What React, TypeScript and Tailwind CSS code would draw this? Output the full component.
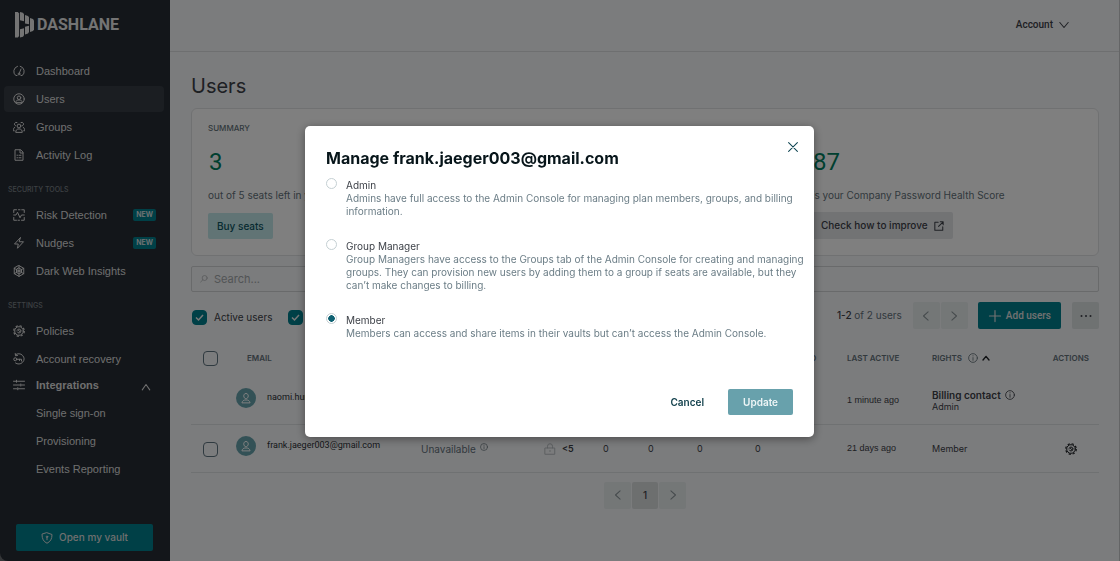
import { useState, type ReactNode } from "react";

function Icon({ children, className = "size-3" }: { children: ReactNode; className?: string }) {
  return (
    <svg
      viewBox="0 0 24 24"
      fill="none"
      stroke="currentColor"
      strokeWidth="2"
      strokeLinecap="round"
      strokeLinejoin="round"
      aria-hidden="true"
      className={`shrink-0 ${className}`}
    >
      {children}
    </svg>
  );
}

const icons = {
  dashboard: (
    <>
      <path d="M8 21H5.500A10.700 10.700 0 0 1 9 2.600M14.500 2.500A10.700 10.700 0 0 1 18.500 21H16" />
      <path d="M16 8l-3 7.500" />
      <circle cx="12" cy="18" r="1.800" />
    </>
  ),
  users: (
    <>
      <circle cx="12" cy="12" r="10.5" />
      <circle cx="12" cy="9.5" r="3.5" />
      <path d="M5.5 18.5c0-3 2.500-4 4.500-4.500h4c2 .5 4.500 1.500 4.500 4.500z" />
    </>
  ),
  groups: (
    <>
      <circle cx="12" cy="10" r="3.8" />
      <path d="M5.500 22c0-4 2.500-5.500 4.500-6h4c2 .5 4.500 2 4.500 6z" />
      <path d="M8 3a3.500 3.500 0 1 0-3 6.500M16 3a3.500 3.500 0 1 1 3 6.500M3.500 12.500C1 14 .5 17 .5 19.500h2M20.500 12.500c2.500 1.500 3 4.500 3 7h-2" />
    </>
  ),
  log: (
    <>
      <path d="M14.500 1.500H4v21h16V7zM14 2v6h6" />
      <path d="M8 12.500h1M12 12.500h4M8 17.500h1M12 17.500h4" />
    </>
  ),
  risk: (
    <>
      <path d="M1.500 7V1.500H7M11 1.500h3M17.500 1.500h5V7M22.500 17v5.500H17M13 22.500h-3M7 22.500H1.500V17" />
      <path d="M1.500 12H6l3-5.500 5 11 3-5.500h5.500" />
    </>
  ),
  nudges: <path d="M14.500 1.500L3 14h7.500L9 22.500 21 9.500h-8z" />,
  web: (
    <>
      <path d="M12 1.200l9.500 5.400v10.800L12 22.800l-9.500-5.400V6.600z" />
      <path d="M12 6l5 3v6l-5 3-5-3V9zM12 1.500V23M2.500 6.600l19 10.800M21.500 6.600l-19 10.800" />
    </>
  ),
  gear: (
    <>
      <circle cx="12" cy="12" r="8.600" />
      <circle cx="12" cy="12" r="10.600" strokeWidth="2.400" strokeLinecap="butt" strokeDasharray="4.500 3.825" />
      <circle cx="12" cy="12" r="4" strokeDasharray="9.500 3" />
      <path d="M11 11l2.500 2" />
    </>
  ),
  recovery: (
    <>
      <path d="M5 3.500A10.400 10.400 0 1 1 5 20M4.500 1l.5 4.500 4-.5" />
      <circle cx="4.500" cy="12.500" r="3" />
      <path d="M7.500 12.500H17v3.500M13 12.500V15" />
    </>
  ),
  sliders: (
    <path d="M1 4.500h4.500M9 4.500h14M7 2.500v4M1 12h12.500M17 12h6M15.500 10v4M1 19.500h6.500M11 19.500h12M9.500 17.500v4" />
  ),
};

function Info({ className = "size-2.5" }: { className?: string }) {
  return (
    <Icon className={className}>
      <circle cx="12" cy="12" r="10.500" />
      <path d="M12 11v6.500M12 6.500v.6" />
    </Icon>
  );
}

function Chevron({ dir, className = "size-3" }: { dir: "up" | "down" | "left" | "right"; className?: string }) {
  const paths = {
    up: "M3 19l9-13 9 13",
    down: "M2 6l10 12 10-12",
    left: "M17 2L6 12l11 10",
    right: "M7 2l11 10-11 10",
  };
  return (
    <Icon className={className}>
      <path strokeWidth="2.500" d={paths[dir]} />
    </Icon>
  );
}

function NavItem({
  icon,
  label,
  active,
  isNew,
}: {
  icon?: ReactNode;
  label: string;
  active?: boolean;
  isNew?: boolean;
}) {
  return (
    <a
      href="#"
      className={`flex h-[26px] items-center rounded-sm pr-2 pl-2 text-[11px] ${active ? "bg-[#373c44]" : ""}`}
    >
      <span className="flex w-6 items-center pl-px">{icon && <Icon className="size-3">{icon}</Icon>}</span>
      <span className="flex-1">{label}</span>
      {isNew && (
        <span className="rounded-xs bg-[#00818f] px-[3px] font-[Inter] text-[7px] leading-3 font-semibold text-[#e8e8e8]">
          NEW
        </span>
      )}
    </a>
  );
}

function NavLabel({ children }: { children: ReactNode }) {
  return (
    <h2 className="mt-3.5 mb-1 pl-1 font-[Inter] text-[7px] leading-4 font-medium text-[#7b8288]">{children}</h2>
  );
}

function Sidebar() {
  return (
    <aside className="flex w-[170px] shrink-0 flex-col rounded-bl-lg bg-[#272d35] font-['Liberation_Sans',sans-serif] text-[#dedede]">
      <div className="flex h-[58px] items-start gap-[3px] pt-3 pl-[15px] text-[#e8e8e8]">
        <svg viewBox="0 0 19 26" className="h-[26px] w-[19px] shrink-0" fill="currentColor" aria-hidden="true">
          <path d="M0 0h2.800l1.300 1.400v22.600l-1.300 1.400H0z" />
          <path d="M5 0l3 .7 1 1.500v7L5 8.200zM5 17.300l4-1v6.900l-1 1.500-3 .8z" />
          <path d="M10 3l3 .9 1 1.400v7L10 11.500zM10 14.800l4-1V20l-1 1.500-3 1z" />
          <path d="M15 6l3 1 1 1.500v9L18 19l-3 1z" />
        </svg>
        <span className="mt-px font-[Roboto] text-base leading-6 font-bold">DASHLANE</span>
      </div>
      <nav className="flex flex-col pr-1.5 pl-1">
        <div className="flex flex-col gap-0.5">
          <NavItem icon={icons.dashboard} label="Dashboard" />
          <NavItem icon={icons.users} label="Users" active />
          <NavItem icon={icons.groups} label="Groups" />
          <NavItem icon={icons.log} label="Activity Log" />
        </div>
        <NavLabel>SECURITY TOOLS</NavLabel>
        <div className="flex flex-col gap-0.5">
          <NavItem icon={icons.risk} label="Risk Detection" isNew />
          <NavItem icon={icons.nudges} label="Nudges" isNew />
          <NavItem icon={icons.web} label="Dark Web Insights" />
        </div>
        <NavLabel>SETTINGS</NavLabel>
        <div className="flex flex-col gap-0.5">
          <NavItem icon={icons.gear} label="Policies" />
          <NavItem icon={icons.recovery} label="Account recovery" />
        </div>
        <button type="button" className="flex h-[26px] items-center pr-[13px] pl-2 text-[11px] font-bold">
          <span className="flex w-6 pl-px">
            <Icon className="size-3">{icons.sliders}</Icon>
          </span>
          <span className="flex-1 text-left">Integrations</span>
          <Chevron dir="up" className="mt-1 size-2.5" />
        </button>
        <div className="mt-0.5 flex flex-col gap-0.5">
          <NavItem label="Single sign-on" />
          <NavItem label="Provisioning" />
          <NavItem label="Events Reporting" />
        </div>
      </nav>
      <button
        type="button"
        className="mr-[17px] mb-2.5 ml-4 mt-auto flex h-[27px] items-center justify-center gap-1.5 rounded-xs bg-[#00818f] font-[Inter] text-[10px] font-medium"
      >
        <Icon className="size-3">
          <path d="M12 1.500l10 3.500c0 9-3 14-10 17.500C5 19 2 14 2 5z" />
          <circle cx="12" cy="9.500" r="1.500" />
          <path d="M12 11v4.500" />
        </Icon>
        Open my vault
      </button>
    </aside>
  );
}

function Check({ label, checked }: { label: string; checked?: boolean }) {
  return (
    <span className="relative flex size-[15px] shrink-0">
      <input
        type="checkbox"
        aria-label={label}
        defaultChecked={checked}
        className="peer size-[15px] appearance-none rounded-[4px] border border-[#5f7480] checked:border-[#00818f] checked:bg-[#00818f]"
      />
      <svg
        viewBox="0 0 15 15"
        fill="none"
        stroke="#f2f2f2"
        strokeWidth="1.500"
        aria-hidden="true"
        className="pointer-events-none absolute inset-0 hidden peer-checked:block"
      >
        <path d="M4 7.500l2.500 2.500 4.500-5" />
      </svg>
    </span>
  );
}

function Avatar() {
  return (
    <span className="flex size-5 shrink-0 items-center justify-center rounded-full bg-[#66a3ad] text-white">
      <Icon className="size-3">
        <path d="M12 3c3 0 4.500 2 4.500 4.800 0 3-2 5.700-4.500 5.700s-4.500-2.700-4.500-5.700C7.500 5 9 3 12 3zM4 21c.5-3 3-4.500 5.500-5h5c2.500.5 5 2 5.500 5z" />
      </Icon>
    </span>
  );
}

function Pager({ dir }: { dir: "left" | "right" }) {
  return (
    <button
      type="button"
      aria-label={dir === "left" ? "Previous page" : "Next page"}
      className="flex h-[27px] w-[27px] items-center justify-center rounded-xs bg-[#e9eeef] text-[#8c979b]"
    >
      <Chevron dir={dir} className="size-2.5" />
    </button>
  );
}

const users = [
  { email: "naomi.hunter003@gmail.com", active: "1 minute ago", owner: true },
  { email: "frank.jaeger003@gmail.com", active: "21 days ago", owner: false },
];

function UsersTable() {
  return (
    <table className="w-full table-fixed text-left text-[9px] text-[#3d4148]">
      <colgroup>
        <col className="w-[45px]" />
        <col />
        <col className="w-[123px]" />
        <col className="w-[59px]" />
        <col className="w-[45px]" />
        <col className="w-[49px]" />
        <col className="w-[58px]" />
        <col className="w-[92px]" />
        <col className="w-[85px]" />
        <col className="w-[167px]" />
      </colgroup>
      <thead className="text-[8px] font-semibold text-[#64727a]">
        <tr className="h-9">
          <th className="pl-3">
            <Check label="Select all users" />
          </th>
          <th className="pl-[11px] font-semibold">EMAIL</th>
          <th className="font-semibold">HEALTH SCORE</th>
          <th className="font-semibold">LOGINS</th>
          <th className="font-semibold">SAFE</th>
          <th className="font-semibold">WEAK</th>
          <th className="font-semibold">REUSED</th>
          <th className="font-semibold">COMPROMISED</th>
          <th className="font-semibold">LAST ACTIVE</th>
          <th className="font-semibold">
            <span className="flex items-center justify-between pr-2.5">
              <span className="flex items-center gap-1.5">
                RIGHTS
                <span className="flex items-center gap-1">
                  <Info />
                  <Icon className="size-2 text-[#1c2024]">
                    <path strokeWidth="4" d="M3 18l9-11 9 11" />
                  </Icon>
                </span>
              </span>
              ACTIONS
            </span>
          </th>
        </tr>
      </thead>
      <tbody>
        {users.map((u) => (
          <tr key={u.email} className="h-12 border-b border-[#dfe2e4]">
            <td className="pt-0.5 pl-3">{!u.owner && <Check label={`Select ${u.email}`} />}</td>
            <td>
              <span className="flex items-center gap-[11px] pb-1 font-[Roboto] text-[#2b3036]">
                <Avatar />
                {u.email}
              </span>
            </td>
            <td className="pt-0.5 text-[10px] text-[#64727a]">
              <span className="flex items-center gap-1">
                Unavailable
                <Info className="mb-1 size-2" />
              </span>
            </td>
            <td className="pt-0.5">
              <span className="flex items-center gap-1.5 font-semibold">
                <Icon className="size-3 text-[#b9bfc3]">
                  <path d="M2.500 10h19v12.500h-19zM7 10V6.500a5 5 0 0 1 10 0V10M12 15v2" />
                </Icon>
                &lt;5
              </span>
            </td>
            <td className="pt-0.5">0</td>
            <td className="pt-0.5">0</td>
            <td className="pt-0.5">0</td>
            <td className="pt-0.5">0</td>
            <td className="pt-0.5 font-['Liberation_Sans']">{u.active}</td>
            <td className="pt-0.5">
              {u.owner ? (
                <span className="flex flex-col">
                  <span className="flex items-center gap-1 text-[10px] leading-3 font-semibold">
                    Billing contact <Info />
                  </span>
                  <span className="leading-3">Admin</span>
                </span>
              ) : (
                <span className="flex items-center justify-between pr-[22px]">
                  Member
                  <button type="button" aria-label="Manage user" className="text-[#1c2024]">
                    <Icon className="size-3">{icons.gear}</Icon>
                  </button>
                </span>
              )}
            </td>
          </tr>
        ))}
      </tbody>
    </table>
  );
}

function Page() {
  return (
    <main className="min-w-0 flex-1 border-r border-[#c8cacc] bg-[#f7f8fa] text-[#3d4148]">
      <header className="flex h-[52px] items-center justify-end border-b border-[#dcdee0] pr-[50px] pb-0.5">
        <button type="button" className="flex items-center gap-1.5 font-[Roboto] text-[10px] font-medium">
          Account <Chevron dir="down" className="size-2.5" />
        </button>
      </header>
      <div className="pr-5 pl-[21px]">
        <h1 className="pt-5 pb-2 text-xl leading-7">Users</h1>
        <section className="grid h-[148px] grid-cols-3 gap-8 rounded-md border border-[#e1e3e5] bg-white px-4">
          <div className="col-span-2 flex flex-col items-start">
            <h2 className="mt-[11px] text-[8px] leading-4 font-medium text-[#64727a]">SUMMARY</h2>
            <p className="mt-3 pl-px font-[Roboto] text-2xl leading-7 font-normal text-[#008060]">3</p>
            <p className="mt-[11px] text-[10px] leading-4 text-[#64727a]">out of 5 seats left in your plan</p>
            <button type="button" className="mt-2.5 h-[26px] rounded-xs bg-[#c2e8ea] px-[9px] text-[10px] font-medium text-[#0e5663]">
              Buy seats
            </button>
          </div>
          <div className="flex flex-col items-start">
            <p className="mt-[39px] pl-px font-[Roboto] text-2xl leading-7 font-normal text-[#008060]">87</p>
            <p className="mt-[11px] text-[10px] leading-4 text-[#64727a]">is your Company Password Health Score</p>
            <button
              type="button"
              className="mt-[9px] flex h-[27px] items-center gap-1.5 rounded-xs bg-[#e4e6e9] px-[9px] text-[10px] font-medium"
            >
              Check how to improve
              <Icon className="size-2.5">
                <path strokeWidth="2.500" d="M10 3H2v19h19v-8M15 2h7v7M22 2L11 13" />
              </Icon>
            </button>
          </div>
        </section>
        <label className="mt-2.5 flex h-[26px] items-center gap-1.5 rounded-xs border border-[#d2d5d7] px-2 text-[#a4a9ac]">
          <Icon className="size-2">
            <circle cx="14" cy="9" r="7.500" />
            <path d="M8.500 14.500L2 21" />
          </Icon>
          <input
            type="search"
            aria-label="Search"
            placeholder="Search..."
            className="w-full bg-transparent text-[11px] outline-none placeholder:text-[#a4a9ac]"
          />
        </label>
        <div className="mt-2.5 flex h-[27px] items-center text-[10px]">
          <label className="ml-px flex w-24 items-center gap-[7px] pt-1">
            <Check label="Active users" checked /> Active users
          </label>
          <label className="flex items-center gap-[7px] pt-1">
            <Check label="Pending invitations" checked /> Pending
          </label>
          <p className="mr-[11px] ml-auto text-[#64727a]">
            <span className="font-medium text-[#3d4148]">1-2</span> of 2 users
          </p>
          <div className="flex gap-px">
            <Pager dir="left" />
            <Pager dir="right" />
          </div>
          <button
            type="button"
            className="ml-2.5 flex h-[27px] items-center gap-1 rounded-xs bg-[#00818f] px-2.5 font-[Roboto] font-medium text-[#e2e2e2]"
          >
            <Icon className="size-3.5">
              <path d="M12 2.500v19M2.500 12h19" />
            </Icon>
            Add users
          </button>
          <button
            type="button"
            aria-label="More actions"
            className="ml-[11px] flex size-[27px] items-center justify-center rounded-xs bg-[#dfe4e5]"
          >
            <svg viewBox="0 0 12 12" className="size-3" fill="currentColor" aria-hidden="true">
              <circle cx="1.500" cy="6" r="1" />
              <circle cx="6" cy="6" r="1" />
              <circle cx="10.500" cy="6" r="1" />
            </svg>
          </button>
        </div>
        <div className="mt-[11px]">
          <UsersTable />
        </div>
        <div className="mt-[9px] flex justify-center gap-px text-[10px]">
          <Pager dir="left" />
          <button type="button" className="h-[27px] w-[26px] rounded-xs bg-[#dadedf] font-medium">
            1
          </button>
          <Pager dir="right" />
        </div>
      </div>
    </main>
  );
}

const roles = [
  {
    id: "admin",
    name: "Admin",
    text: "Admins have full access to the Admin Console for managing plan members, groups, and billing information.",
  },
  {
    id: "manager",
    name: "Group Manager",
    text: "Group Managers have access to the Groups tab of the Admin Console for creating and managing groups. They can provision new users by adding them to a group if seats are available, but they can’t make changes to billing.",
  },
  {
    id: "member",
    name: "Member",
    text: "Members can access and share items in their vaults but can’t access the Admin Console.",
  },
];

function ManageDialog() {
  const [role, setRole] = useState("member");
  return (
    <div className="fixed inset-0 flex items-center justify-center bg-black/50 pt-0.5 pr-px">
      <div
        role="dialog"
        aria-modal="true"
        aria-labelledby="dialog-title"
        className="relative w-[509px] rounded-[5px] bg-white px-[21px] pt-5 pb-[22px] shadow-[0_2px_10px_rgba(0,0,0,0.4)]"
      >
        <button type="button" aria-label="Close" className="absolute top-4 right-4 text-[#0e4452]">
          <Icon className="size-2.5">
            <path strokeWidth="2.500" d="M1.500 1.500l21 21M22.500 1.500l-21 21" />
          </Icon>
        </button>
        <h2 id="dialog-title" className="mb-2 text-base leading-6 font-bold text-[#07151a]">
          Manage frank.jaeger003@gmail.com
        </h2>
        <div className="-mr-3 flex flex-col gap-[21px]">
          {roles.map((r) => (
            <label key={r.id} className="flex gap-[9px]">
              <input
                type="radio"
                name="role"
                checked={role === r.id}
                onChange={() => setRole(r.id)}
                className="size-[11px] shrink-0 appearance-none rounded-full border border-[#c5d0d3] checked:bg-[radial-gradient(circle,#0e6172_3px,transparent_3.500px)]"
              />
              <span className="pt-px text-[10px] leading-[13px] text-[#6b7d86]">
                <span className="block text-[#3d4148]">{r.name}</span>
                {r.text}
              </span>
            </label>
          ))}
        </div>
        <div className="mt-[49px] flex justify-end gap-[9px] text-[10px] font-semibold">
          <button type="button" className="h-[26px] px-[15px] text-[#0e3d49]">
            Cancel
          </button>
          <button type="button" className="h-[26px] rounded-xs bg-[#68a1ac] px-[15px] text-[#eef5f6]">
            Update
          </button>
        </div>
      </div>
    </div>
  );
}

export default function App() {
  return (
    <div className="flex min-h-screen bg-[#6b6e72] font-[Inter,sans-serif]">
      <Sidebar />
      <Page />
      <ManageDialog />
    </div>
  );
}
